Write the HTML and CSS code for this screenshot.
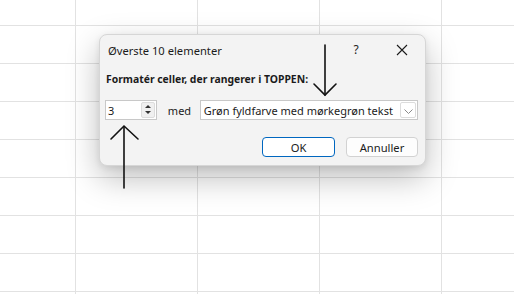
FILE: index.html
```html
<!DOCTYPE html>
<html lang="da">
  <head>
    <meta charset="UTF-8" />
    <meta name="viewport" content="width=device-width, initial-scale=1.0" />
    <title>Øverste 10 elementer</title>
    <link rel="stylesheet" href="styles.css">
  </head>
  <body>
    <div class="sheet"></div>

    <div class="dialog">
      <div class="titlebar">
        <span class="title">Øverste 10 elementer</span>
        <span class="tb_btn">?</span>
        <span class="tb_btn close">
          <svg width="12" height="12" viewBox="0 0 12 12">
            <path d="M1 1 L11 11 M11 1 L1 11" stroke="#1a1a1a" stroke-width="1.1" fill="none" />
          </svg>
        </span>
      </div>

      <div class="dialog_body">
        <div class="label">Formatér celler, der rangerer i TOPPEN:</div>

        <div class="input_row">
          <div class="spin">
            <span class="spin_value">3</span>
            <div class="spin_btns">
              <span class="spin_up"></span>
              <span class="spin_down"></span>
            </div>
          </div>
          <span class="med">med</span>
          <div class="select">
            <span class="select_value">Grøn fyldfarve med mørkegrøn tekst</span>
            <span class="select_btn">
              <svg width="9" height="5" viewBox="0 0 9 5">
                <path d="M0.5 0.5 L4.5 4.5 L8.5 0.5" stroke="#8a8a8a" stroke-width="1" fill="none" />
              </svg>
            </span>
          </div>
        </div>

        <div class="button_row">
          <button class="btn primary">OK</button>
          <button class="btn">Annuller</button>
        </div>
      </div>
    </div>

    <!-- annotation arrows drawn over the screenshot -->
    <svg class="arrows" width="514" height="294" viewBox="0 0 514 294">
      <g stroke="#111" stroke-width="1.6" fill="none" stroke-linecap="round">
        <path d="M325 45 L325 95" />
        <path d="M314 84 L325 95 L336 84" />
        <path d="M124 127 L124 188" />
        <path d="M111 139 L124 126 L138 139" />
      </g>
    </svg>
  </body>
</html>
```

FILE: styles.css
```css
*,
*::before,
*::after {
  box-sizing: border-box;
}
html,
body {
  margin: 0;
  padding: 0;
  height: 100%;
}
body {
  font-family: "Noto Sans", "Open Sans", "Liberation Sans", sans-serif;
  color: #1b1b1b;
  background: #fff;
  overflow: hidden;
}

.sheet {
  height: 100%;
  background-image:
    linear-gradient(to right, #e2e2e2 1px, transparent 1px),
    linear-gradient(to bottom, #e2e2e2 1px, transparent 1px);
  background-size: 122px 100%, 100% 38px;
  background-position: 75px 0, 0 25px;
}

.dialog {
  position: absolute;
  left: 99px;
  top: 34px;
  width: 327px;
  height: 132px;
  background: #f3f3f3;
  border: 1px solid #d6d6d6;
  border-radius: 8px;
  box-shadow: 0 12px 32px rgba(0, 0, 0, 0.26), 0 2px 6px rgba(0, 0, 0, 0.08);
}

.titlebar {
  display: flex;
  align-items: center;
  height: 29px;
  padding-left: 8px;
}
.title {
  flex: 1;
  font-size: 11.2px;
  padding-top: 1px;
}
.tb_btn {
  width: 46px;
  display: flex;
  justify-content: center;
  align-items: center;
  font-size: 12px;
}

.dialog_body {
  padding: 0 7px 0 5px;
}
.label {
  margin-top: 7px;
  font-size: 10.4px;
  font-weight: bold;
  line-height: 16px;
  padding-left: 1px;
}

.input_row {
  display: flex;
  align-items: center;
  margin-top: 13px;
  height: 20px;
}
.spin {
  display: flex;
  align-items: center;
  width: 52px;
  height: 20px;
  background: #fff;
  border: 1px solid #c8c8c8;
  padding: 0 1px 0 2px;
}
.spin_value {
  flex: 1;
  font-size: 11px;
}
.spin_btns {
  display: flex;
  flex-direction: column;
  width: 14px;
  height: 16px;
  background: #f0f0f0;
  border: 1px solid #dcdcdc;
  border-radius: 2px;
}
.spin_up,
.spin_down {
  flex: 1;
  position: relative;
}
.spin_up::after,
.spin_down::after {
  content: "";
  position: absolute;
  left: 3px;
  border-left: 3px solid transparent;
  border-right: 3px solid transparent;
}
.spin_up::after {
  top: 2px;
  border-bottom: 3px solid #333;
}
.spin_down::after {
  top: 1px;
  border-top: 3px solid #333;
}

.med {
  margin-left: 11px;
  width: 32px;
  font-size: 11px;
}
.select {
  display: flex;
  align-items: center;
  width: 219px;
  height: 20px;
  background: #fff;
  border: 1px solid #c8c8c8;
  padding: 0 1px 0 3px;
}
.select_value {
  flex: 1;
  font-size: 11px;
  white-space: nowrap;
}
.select_btn {
  width: 16px;
  height: 16px;
  display: flex;
  justify-content: center;
  align-items: center;
  border: 1px solid #dcdcdc;
  border-radius: 2px;
  padding-top: 2px;
}

.button_row {
  display: flex;
  justify-content: flex-end;
  gap: 11px;
  margin-top: 17px;
}
.btn {
  font-family: inherit;
  font-size: 11.2px;
  color: #1b1b1b;
  width: 72px;
  height: 20px;
  padding: 0;
  background: #fdfdfd;
  border: 1px solid #d2d2d2;
  border-radius: 4px;
}
.btn.primary {
  width: 73px;
  background: #fff;
  border-color: #0067c0;
}

.arrows {
  position: absolute;
  left: 0;
  top: 0;
  pointer-events: none;
}
```
